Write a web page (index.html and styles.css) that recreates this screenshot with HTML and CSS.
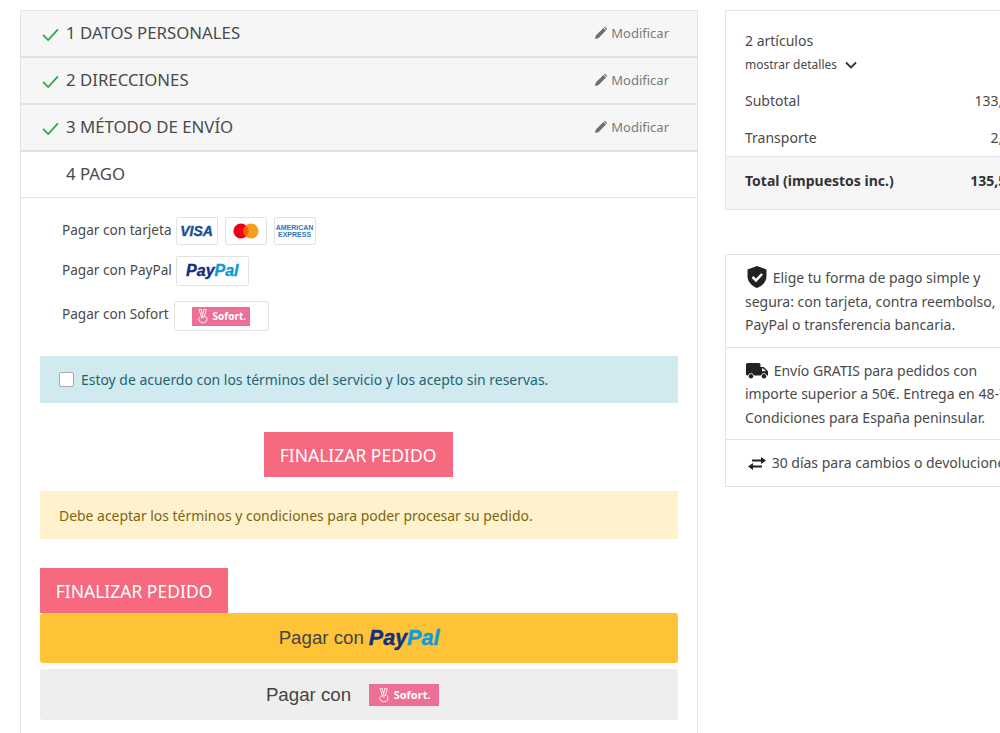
FILE: index.html
```html
<!DOCTYPE html>
<html lang="es">
<head>
  <meta charset="UTF-8">
  <meta name="viewport" content="width=device-width, initial-scale=1.0">
  <title>Finalizar pedido</title>
  <link rel="stylesheet" href="styles.css">
</head>
<body>
  <div class="page">
    <main class="checkout">
      <section class="step done">
        <svg class="check" viewBox="0 0 18 14"><path d="M1 7.500 6.500 13 17 1.500"/></svg>
        <h2>1 DATOS PERSONALES</h2>
        <a class="edit"><svg viewBox="0 0 12 12"><path d="M0 12 .8 8.600 8.400 1l2.600 2.600L3.400 11.200zM9 .5q1-.9 1.800-.1l.8.800q.8.800-.1 1.800z"/></svg>Modificar</a>
      </section>
      <section class="step done">
        <svg class="check" viewBox="0 0 18 14"><path d="M1 7.500 6.500 13 17 1.500"/></svg>
        <h2>2 DIRECCIONES</h2>
        <a class="edit"><svg viewBox="0 0 12 12"><path d="M0 12 .8 8.600 8.400 1l2.600 2.600L3.400 11.200zM9 .5q1-.9 1.800-.1l.8.800q.8.800-.1 1.800z"/></svg>Modificar</a>
      </section>
      <section class="step done">
        <svg class="check" viewBox="0 0 18 14"><path d="M1 7.500 6.500 13 17 1.500"/></svg>
        <h2>3 MÉTODO DE ENVÍO</h2>
        <a class="edit"><svg viewBox="0 0 12 12"><path d="M0 12 .8 8.600 8.400 1l2.600 2.600L3.400 11.200zM9 .5q1-.9 1.800-.1l.8.800q.8.800-.1 1.800z"/></svg>Modificar</a>
      </section>
      <section class="step current">
        <h2>4 PAGO</h2>
      </section>

      <div class="content">
        <div class="methods">
          <div class="method method-card">
            <span class="method-name">Pagar con tarjeta</span>
            <div class="logos">
              <span class="logo logo-small visa">VISA</span>
              <span class="logo logo-small">
                <svg class="mc" viewBox="0 0 26 16"><circle cx="8" cy="8" r="7.600" fill="#eb001b"/><circle cx="18" cy="8" r="7.600" fill="#f79e1b"/><path d="M13 2.200a7.600 7.600 0 0 1 0 11.600 7.600 7.600 0 0 1 0-11.600z" fill="#ff5f00"/></svg>
              </span>
              <span class="logo logo-small amex">AMERICAN<br>EXPRESS</span>
            </div>
          </div>
          <div class="method method-paypal">
            <span class="method-name">Pagar con PayPal</span>
            <span class="logo logo-paypal paypal"><b>Pay</b><i>Pal</i></span>
          </div>
          <div class="method method-sofort">
            <span class="method-name">Pagar con Sofort</span>
            <span class="logo logo-sofort"><span class="sofort"><svg viewBox="0 0 14 18"><path d="M5 9.500 2.500 1.500 5 1.200 6.500 8 8 1.200l2.800.6L8.500 9.500M3.200 10.500q-1.500 1-1 3Q3 17 7 17t4.500-3.500q.5-3-1.500-4L5 9.200q-1 1 .5 2H8"/></svg>Sofort.</span></span>
          </div>
        </div>

        <div class="alert alert-info">
          <span class="checkbox"></span>
          <span>Estoy de acuerdo con los términos del servicio y los acepto sin reservas.</span>
        </div>

        <div class="center">
          <a class="btn">FINALIZAR PEDIDO</a>
        </div>

        <div class="alert alert-warning">Debe aceptar los términos y condiciones para poder procesar su pedido.</div>

        <a class="btn btn-left">FINALIZAR PEDIDO</a>
        <a class="pay pay-paypal">Pagar con <span class="paypal"><b>Pay</b><i>Pal</i></span></a>
        <a class="pay pay-sofort">Pagar con <span class="sofort"><svg viewBox="0 0 14 18"><path d="M5 9.500 2.500 1.500 5 1.200 6.500 8 8 1.200l2.800.6L8.500 9.500M3.200 10.500q-1.500 1-1 3Q3 17 7 17t4.500-3.500q.5-3-1.500-4L5 9.200q-1 1 .5 2H8"/></svg>Sofort.</span></a>
      </div>
    </main>

    <aside class="sidebar">
      <div class="card summary">
        <div class="summary-top">
          <p class="count">2 artículos</p>
          <p class="details">mostrar detalles
            <svg viewBox="0 0 12 8"><path d="M1 1.500 6 6.500l5-5"/></svg>
          </p>
          <div class="line"><span>Subtotal</span><span>133,00 €</span></div>
          <div class="line"><span>Transporte</span><span>2,50 €</span></div>
        </div>
        <div class="line total"><span>Total (impuestos inc.)</span><span>135,50 €</span></div>
      </div>

      <div class="card info">
        <div class="info-item">
          <svg class="ico ico-shield" viewBox="0 0 20 22"><path fill="#222" d="M10 0 19.500 3.500V10c0 5.500-4 10-9.500 12C4.500 20 .5 15.500.5 10V3.500z"/><path d="M5.500 11 9 14.500 15 8" fill="none" stroke="#fff" stroke-width="2.500"/></svg>
          Elige tu forma de pago simple y<br>segura: con tarjeta, contra reembolso,<br>PayPal o transferencia bancaria.
        </div>
        <div class="info-item">
          <svg class="ico ico-truck" viewBox="0 0 22 16"><path fill="#222" d="M1.500 0H13q1.500 0 1.500 1.500V4h3.200L22 8.300V12.500h-1.100a3 3 0 0 0-5.800 0H7.900a3 3 0 0 0-5.800 0H1.500Q0 12.500 0 11V1.500Q0 0 1.500 0z"/><path fill="#fff" d="M16 5.500h1.200l2.800 2.800H16z"/><circle cx="5" cy="13.300" r="2.200" fill="#222"/><circle cx="18" cy="13.300" r="2.200" fill="#222"/></svg>
          Envío GRATIS para pedidos con<br>importe superior a 50€. Entrega en 48-72 h.<br>Condiciones para España peninsular.
        </div>
        <div class="info-item">
          <svg class="ico ico-swap" viewBox="0 0 18 13"><path fill="#222" d="M4 2.500h9V0l5 3.500L13 7V4.500H4zM14 8.500H5V6L0 9.500 5 13v-2.500h9z"/></svg>
          30 días para cambios o devoluciones
        </div>
      </div>
    </aside>
  </div>
</body>
</html>
```

FILE: styles.css
```css
html, body {
  margin: 0;
  padding: 0;
  height: 733px;
  overflow: hidden;
  background: #fff;
}
body {
  font-family: "Noto Sans", "Open Sans", sans-serif;
  font-size: 14px;
  color: #4a4a4a;
}
p, h2 {
  margin: 0;
}
.page {
  display: flex;
  align-items: flex-start;
  gap: 27px;
  width: 1100px;
  padding: 10px 0 0 20px;
}

/* columna izquierda */
.checkout {
  flex: none;
  width: 676px;
  height: 740px;
  border: 1px solid #e4e4e4;
  border-bottom: 0;
}
.step {
  display: flex;
  align-items: center;
  height: 43px;
  padding: 0 28px 2px 45px;
  position: relative;
  border-bottom: 2.500px solid #e1e1e1;
}
.step h2 {
  flex: 1;
  font-size: 16.800px;
  font-weight: 400;
  color: #4a4a4a;
}
.done {
  background: #f6f6f6;
}
.current {
  border-bottom: 1px solid #e4e4e4;
}
.check {
  position: absolute;
  left: 21px;
  top: 17px;
  width: 17px;
  height: 13px;
  fill: none;
  stroke: #28a745;
  stroke-width: 1.800;
}
.edit {
  display: flex;
  align-items: center;
  gap: 4px;
  font-size: 13px;
  color: #7a7a7a;
}
.edit svg {
  width: 12px;
  height: 12px;
  fill: #707070;
}
.content {
  padding: 0 19px;
}
.methods {
  padding-top: 19px;
}
.method {
  display: flex;
  align-items: center;
  gap: 4px;
  margin-left: 22px;
  font-size: 13.600px;
}
.method-name {
  padding-bottom: 4px;
}
.method-paypal {
  margin-top: 11px;
}
.method-sofort {
  margin-top: 15px;
  gap: 5px;
}
.method-sofort .method-name {
  padding-bottom: 6px;
}
.logos {
  display: flex;
  gap: 7px;
}
.logo {
  display: flex;
  align-items: center;
  justify-content: center;
  box-sizing: border-box;
  background: #fff;
  border: 1px solid #e2e2e2;
  border-radius: 2px;
}
.logo-small {
  width: 42px;
  height: 28px;
}
.logo-paypal {
  width: 73px;
  height: 30px;
  font-size: 16px;
}
.logo-sofort {
  width: 95px;
  height: 30px;
}
.visa {
  font-family: "Liberation Sans", sans-serif;
  font-weight: 700;
  font-style: italic;
  font-size: 14px;
  color: #1a4f8f;
  -webkit-text-stroke: .4px #1a4f8f;
}
.mc {
  width: 26px;
  height: 16px;
}
.amex {
  font-family: "Liberation Sans", sans-serif;
  font-weight: 700;
  font-size: 7px;
  line-height: 7px;
  text-align: center;
  color: #2e77bc;
}
.paypal {
  font-family: "Liberation Sans", sans-serif;
  font-weight: 700;
  font-style: italic;
}
.paypal b {
  color: #12307f;
  -webkit-text-stroke: .4px #12307f;
}
.paypal i {
  color: #0c9bdc;
  -webkit-text-stroke: .4px #0c9bdc;
}
.sofort {
  display: inline-flex;
  align-items: center;
  justify-content: center;
  gap: 4px;
  width: 58px;
  height: 19px;
  background: #ee6f95;
  color: #fff;
  font-size: 10px;
  font-weight: 700;
}
.sofort svg {
  width: 12px;
  height: 16px;
  fill: none;
  stroke: #fff;
  stroke-width: 1;
}
.alert {
  padding: 0 19px;
  font-size: 13.940px;
}
.alert-info {
  display: flex;
  align-items: center;
  gap: 7px;
  height: 47px;
  margin-top: 25px;
  background: #d0eaf0;
  color: #1f6470;
}
.checkbox {
  width: 13px;
  height: 13px;
  background: #fff;
  border: 1px solid #aaa;
  border-radius: 2px;
}
.center {
  display: flex;
  justify-content: center;
  margin-top: 29px;
  padding-right: 2px;
}
.btn {
  display: flex;
  align-items: center;
  justify-content: center;
  width: 189px;
  height: 45px;
  background: #f6697f;
  color: #fff;
  font-size: 17.500px;
}
.alert-warning {
  display: flex;
  align-items: center;
  height: 48px;
  margin-top: 14px;
  background: #fff2cc;
  color: #7f6410;
}
.btn-left {
  width: 188px;
  margin-top: 29px;
}
.pay {
  display: flex;
  align-items: center;
  justify-content: center;
  border-radius: 3px;
  font-family: "Liberation Sans", sans-serif;
  font-size: 18.700px;
  color: #444;
}
.pay-paypal {
  height: 50px;
  background: #ffc337;
}
.pay-paypal .paypal {
  margin-left: 5px;
  font-size: 21.500px;
}
.pay-sofort {
  height: 51px;
  margin-top: 6px;
  padding-right: 13px;
  background: #eeeeee;
}
.pay-sofort .sofort {
  width: 70px;
  height: 22px;
  margin-left: 18px;
  font-family: "Noto Sans", sans-serif;
  font-size: 11px;
}

/* columna derecha */
.sidebar {
  flex: none;
  width: 325px;
}
.card {
  border: 1px solid #e4e4e4;
  font-size: 14px;
}
.summary-top {
  padding: 20px 19px 8px;
}
.count {
  line-height: 20px;
}
.details {
  display: flex;
  align-items: center;
  gap: 8px;
  margin-top: 4px;
  font-size: 12px;
  line-height: 20px;
}
.details svg {
  width: 12px;
  height: 8px;
  fill: none;
  stroke: #333;
  stroke-width: 1.800;
}
.line {
  display: flex;
  justify-content: space-between;
  margin-top: 17px;
  line-height: 20px;
}
.summary-top .details + .line {
  margin-top: 16px;
}
.total {
  margin: 0;
  height: 53px;
  padding: 14px 23px 0 19px;
  box-sizing: border-box;
  background: #f6f6f6;
  border-top: 1px solid #e4e4e4;
  font-weight: 700;
  color: #333;
}
.info {
  margin-top: 44px;
}
.info-item {
  padding: 11px 0 10px 19px;
  line-height: 23.500px;
  white-space: nowrap;
  border-bottom: 1px solid #e4e4e4;
}
.info-item:last-child {
  padding: 11px 0 11px 19px;
  border-bottom: 0;
}
.ico {
  margin-right: 2px;
  vertical-align: -5px;
}
.ico-shield {
  width: 20px;
  height: 22px;
  margin-left: 2px;
}
.ico-truck {
  width: 22px;
  height: 16px;
  margin-left: 1px;
  vertical-align: -3px;
}
.ico-swap {
  width: 18px;
  height: 13px;
  margin-left: 3px;
  vertical-align: -2px;
}
```
